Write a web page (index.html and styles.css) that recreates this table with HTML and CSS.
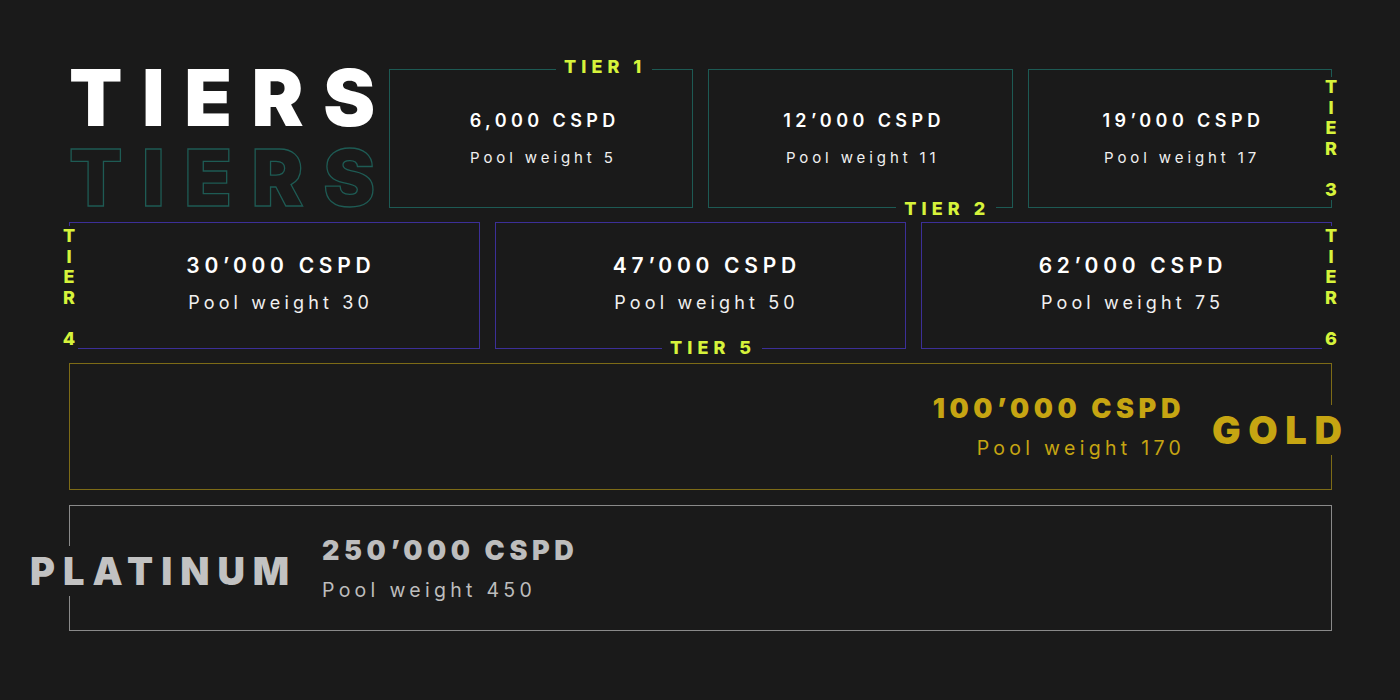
FILE: index.html
```html
<!DOCTYPE html>
<html lang="en">
<head>
<meta charset="utf-8">
<title>Tiers</title>
<link rel="stylesheet" href="styles.css">
</head>
<body>
<main class="page">
  <section class="row-top">
    <div class="title">
      <div class="title-solid">TIERS</div>
      <div class="title-outline">TIERS</div>
    </div>
    <div class="card card-teal">
      <div class="amount">6,000 CSPD</div>
      <div class="weight">Pool weight 5</div>
      <span class="tag tag-t1">TIER 1</span>
    </div>
    <div class="card card-teal">
      <div class="amount">12’000 CSPD</div>
      <div class="weight">Pool weight 11</div>
      <span class="tag tag-t2">TIER 2</span>
    </div>
    <div class="card card-teal">
      <div class="amount">19’000 CSPD</div>
      <div class="weight">Pool weight 17</div>
      <span class="vtag vtag-t3">T<br>I<br>E<br>R<br><br>3</span>
    </div>
  </section>

  <section class="row-mid">
    <div class="card card-purple">
      <div class="amount">30’000 CSPD</div>
      <div class="weight">Pool weight 30</div>
      <span class="vtag vtag-t4">T<br>I<br>E<br>R<br><br>4</span>
    </div>
    <div class="card card-purple">
      <div class="amount">47’000 CSPD</div>
      <div class="weight">Pool weight 50</div>
      <span class="tag tag-t5">TIER 5</span>
    </div>
    <div class="card card-purple">
      <div class="amount">62’000 CSPD</div>
      <div class="weight">Pool weight 75</div>
      <span class="vtag vtag-t6">T<br>I<br>E<br>R<br><br>6</span>
    </div>
  </section>

  <section class="wide wide-gold">
    <div class="wide-text">
      <div class="wide-amount">100’000 CSPD</div>
      <div class="wide-weight">Pool weight 170</div>
    </div>
    <div class="wide-label gold-label">GOLD</div>
  </section>

  <section class="wide wide-plat">
    <div class="wide-label plat-label">PLATINUM</div>
    <div class="wide-text">
      <div class="wide-amount">250’000 CSPD</div>
      <div class="wide-weight">Pool weight 450</div>
    </div>
  </section>
</main>
</body>
</html>
```
FILE: styles.css
```css
* { box-sizing: border-box; }

html, body {
  margin: 0;
  background: #1a1a1a;
}

body {
  width: 1400px;
  height: 700px;
  overflow: hidden;
  font-family: Inter, "Noto Sans", sans-serif;
  color: #ffffff;
}

.page {
  width: 1263px;
  margin-left: 69px;
  padding-top: 69px;
  display: flex;
  flex-direction: column;
  gap: 14px;
}

/* ---------- top row ---------- */
.row-top {
  display: grid;
  grid-template-columns: 305px repeat(3, 1fr);
  grid-template-rows: 139px;
  column-gap: 15px;
  height: 139px;
}

.title {
  height: 139px;
  margin-top: -11px;
  font-weight: 900;
  font-size: 78px;
  line-height: 80px;
  letter-spacing: 0.25em;
  white-space: nowrap;
}

.title-solid { color: #ffffff; }

.title-outline {
  color: transparent;
  -webkit-text-stroke: 1.3px #1e5b54;
}

/* ---------- cards ---------- */
.card {
  position: relative;
  display: flex;
  flex-direction: column;
  align-items: center;
  justify-content: center;
  border: 1px solid;
}

.card-teal {
  border-color: #1d5a54;
  gap: 20px;
}

.card-purple {
  border-color: #3c2f98;
  gap: 18px;
  padding: 0 0 4px 8px;
}

.amount {
  font-weight: 600;
  line-height: 1;
  white-space: nowrap;
}

.weight {
  font-weight: 400;
  line-height: 1;
  white-space: nowrap;
  color: #f0f0f0;
}

.card-teal .amount {
  font-size: 18px;
  letter-spacing: 0.245em;
  padding-left: 0.4em;
}
.card-teal .weight {
  font-size: 15px;
  letter-spacing: 0.26em;
  padding-left: 0.3em;
}
.card-purple .amount {
  font-size: 21px;
  letter-spacing: 0.225em;
  padding-left: 0.225em;
}
.card-purple .weight {
  font-size: 18px;
  letter-spacing: 0.23em;
  padding-left: 0.23em;
}

/* ---------- tier tags ---------- */
.tag,
.vtag {
  position: absolute;
  background: #1a1a1a;
  color: #d6f33b;
  font-weight: 800;
  font-size: 18px;
  white-space: nowrap;
}

.tag {
  line-height: 20px;
  padding: 0 6px 0 8px;
  letter-spacing: 0.28em;
}

.tag-t1 { left: 166px; top: -13px; }
.tag-t2 { left: 187px; bottom: -12px; }
.tag-t5 { left: 166px; bottom: -10px; }

.vtag {
  width: 18px;
  text-align: center;
  line-height: 20.5px;
}

.vtag-t3 { right: -9px; top: 7px; }
.vtag-t4 { left: -10px; top: 3px; }
.vtag-t6 { right: -9px; top: 3px; }

/* ---------- mid row ---------- */
.row-mid {
  display: grid;
  grid-template-columns: repeat(3, 1fr);
  grid-template-rows: 127px;
  column-gap: 15px;
  height: 127px;
}

/* ---------- wide cards ---------- */
.wide {
  display: flex;
  align-items: center;
  border: 1px solid;
  height: 127px;
}

.wide-text {
  display: flex;
  flex-direction: column;
  gap: 17px;
}

.wide-amount {
  font-weight: 900;
  font-size: 27px;
  line-height: 1;
  letter-spacing: 0.17em;
  white-space: nowrap;
}

.wide-weight {
  font-weight: 400;
  font-size: 19.5px;
  line-height: 1;
  letter-spacing: 0.22em;
  white-space: nowrap;
}

.wide-label {
  background: #1a1a1a;
  font-weight: 900;
  font-size: 38px;
  line-height: 50px;
  letter-spacing: 0.2em;
  white-space: nowrap;
  margin-top: 6px;
}

.wide-gold {
  justify-content: flex-end;
  border-color: #7d6b16;
  color: #c6a512;
}

.wide-gold .wide-text {
  align-items: flex-end;
  margin-right: 27px;
}

.gold-label {
  width: 150px;
  margin-right: -31px;
}

.wide-plat {
  border-color: #8a8a8a;
  color: #bdbdbd;
  height: 126px;
  margin-top: 1px;
}

.plat-label {
  width: 292px;
  margin-left: -40px;
  letter-spacing: 0.21em;
  color: #c2c2c2;
}

.wide-plat .wide-text {
  margin-top: 2px;
}
```
